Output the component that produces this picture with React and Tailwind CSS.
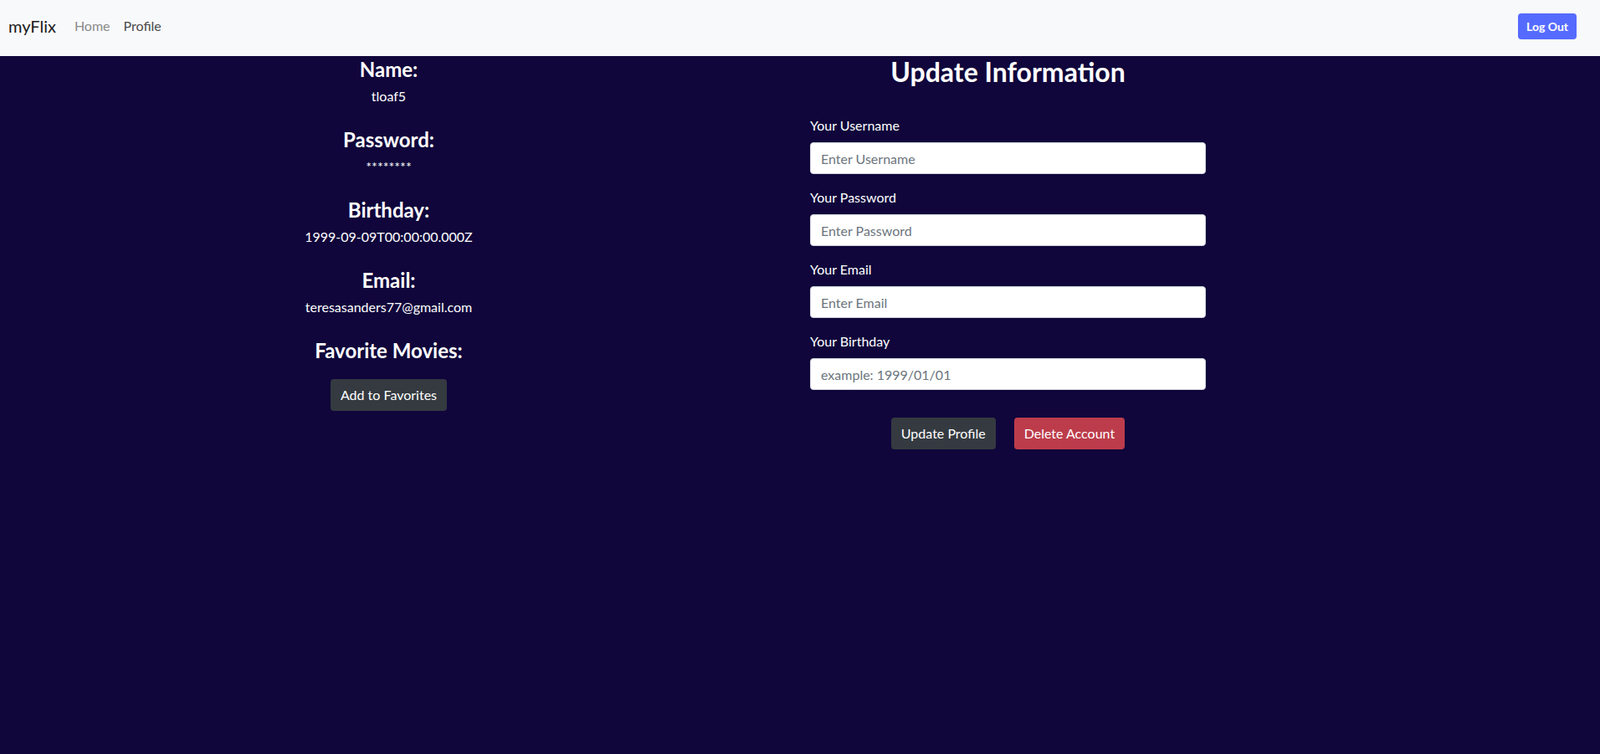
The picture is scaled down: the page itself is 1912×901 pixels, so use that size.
import React from "react";

const font = { fontFamily: "Lato, 'Noto Sans', sans-serif" };

function InfoBlock({ title, value, last }) {
  return (
    <div className={last ? "" : "mb-[25px]"}>
      <h4 className="text-[24px] leading-[29px] font-bold mb-[6px]">{title}</h4>
      <p className="text-[16px] leading-6">{value}</p>
    </div>
  );
}

function Field({ label, placeholder, type = "text" }) {
  return (
    <div className="mb-4">
      <label className="block text-[16px] leading-6 mb-2 text-white">{label}</label>
      <input
        type={type}
        placeholder={placeholder}
        className="block w-full h-[38px] px-3 text-[16px] bg-white text-[#212529] border border-[#ced4da] rounded-[4px] placeholder:text-[#6c757d] outline-none"
        style={font}
      />
    </div>
  );
}

export default function App() {
  return (
    <div className="min-h-[901px] bg-[#10063b] text-white" style={font}>
      <nav className="h-[67px] bg-[#f8f9fa] flex items-center pl-[10px] pr-[28px] pb-[5px]">
        <span className="text-[20px] text-[#1a1a1a] mr-[14px] leading-[30px]">myFlix</span>
        <a className="text-[16px] text-[#8a8a8a] px-2 leading-6">Home</a>
        <a className="text-[16px] text-[#4a4a4a] px-2 leading-6">Profile</a>
        <div className="flex-1" />
        <button className="h-[31px] w-[70px] rounded-[4px] bg-[#556bff] text-white text-[14px] font-bold">
          Log Out
        </button>
      </nav>

      <div className="flex">
        <div className="w-[929px] text-center pt-[1px]">
          <InfoBlock title="Name:" value="tloaf5" />
          <InfoBlock title="Password:" value="********" />
          <InfoBlock title="Birthday:" value="1999-09-09T00:00:00.000Z" />
          <InfoBlock title="Email:" value="teresasanders77@gmail.com" />
          <h4 className="text-[24px] leading-[29px] font-bold mb-[20px]">Favorite Movies:</h4>
          <button className="h-[38px] px-3 rounded-[4px] bg-[#343a40] text-white text-[16px]">
            Add to Favorites
          </button>
        </div>

        <div className="ml-[39px] w-[473px]">
          <h2 className="text-[32px] leading-[38px] font-bold text-center mb-[33px]">
            Update Information
          </h2>
          <Field label="Your Username" placeholder="Enter Username" />
          <Field label="Your Password" placeholder="Enter Password" type="password" />
          <Field label="Your Email" placeholder="Enter Email" type="email" />
          <Field label="Your Birthday" placeholder="example: 1999/01/01" />
          <div className="flex justify-center gap-[22px] mt-[33px]">
            <button className="h-[38px] px-3 rounded-[4px] bg-[#343a40] text-white text-[16px]">
              Update Profile
            </button>
            <button className="h-[38px] px-3 rounded-[4px] bg-[#bc3c4b] text-white text-[16px]">
              Delete Account
            </button>
          </div>
        </div>
      </div>
    </div>
  );
}
